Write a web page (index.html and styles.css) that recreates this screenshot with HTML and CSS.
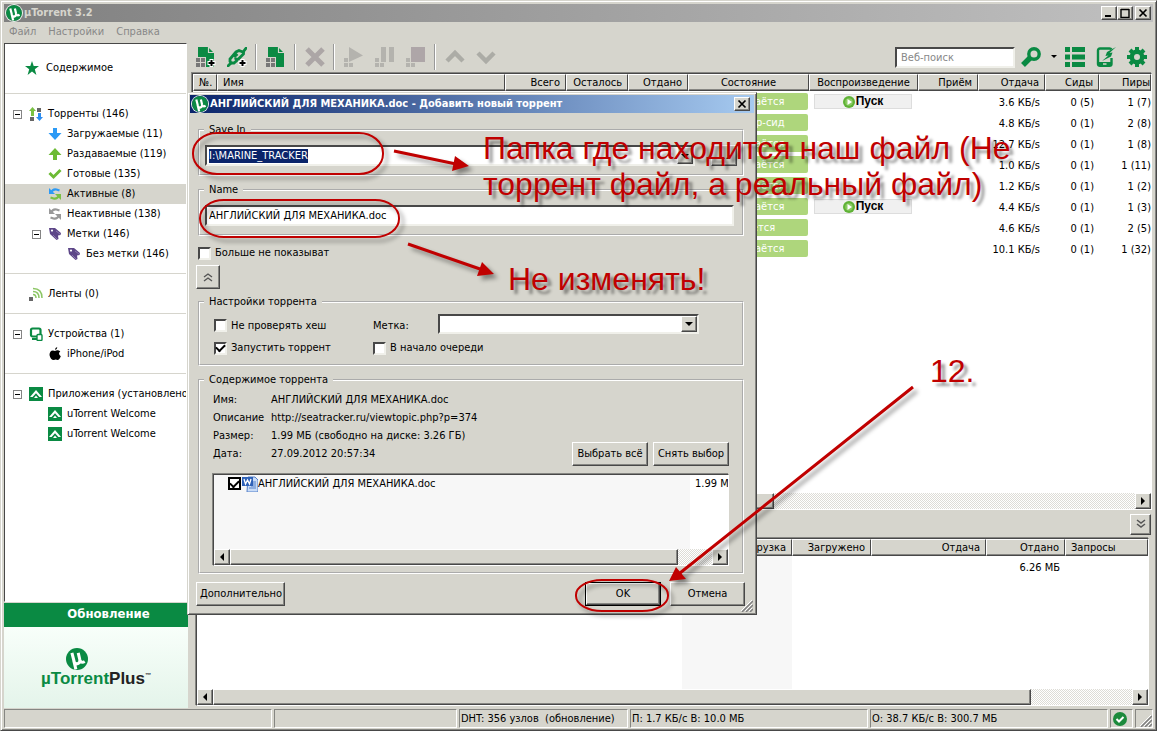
FILE: index.html
```html
<!DOCTYPE html>
<html lang="ru">
<head>
<meta charset="utf-8">
<title>µTorrent 3.2</title>
<link rel="stylesheet" href="styles.css">
</head>
<body>
<svg class="defs" aria-hidden="true">
  <symbol id="logo" viewBox="0 0 16 16"><circle cx="8" cy="8" r="8" fill="#0a8a43"/><path d="M4.300 3.500 5.900 9.800Q6.600 12 8.600 11.400 10.600 10.600 10 8.300L8.900 3.500M10 8.600Q11 11.400 13.600 9.800M5.600 9 7.200 15.500" fill="none" stroke="#fff" stroke-width="2.200"/></symbol>
  <symbol id="app" viewBox="0 0 14 14"><path d="M0 0h14v14H0z" fill="#0a8a43"/><path d="M1 10 7 3l6 7h-2.600L7 6.300 3.600 10z" fill="#fff"/><path d="M5 11l2-2.500L9 11z" fill="#fff"/></symbol>
  <symbol id="tag" viewBox="0 0 14 14"><path d="M1 1h6l6 5-.5 2-2.500.5.500 3.500-2 1L2 7z" fill="#5d4688"/><path d="m5 8 4 4M8 4l4 3" stroke="#8a78ad"/><circle cx="4" cy="3.600" r="1.100" fill="#fff"/></symbol>
  <symbol id="cycle" viewBox="0 0 14 14"><path d="M3 5.500Q5 1.500 8.500 2.500L11.500 3.500" fill="none" stroke="var(--a)" stroke-width="2.200"/><path d="M1 1v6h6z" fill="var(--a)"/><path d="M11 8.500Q9 12.500 5.500 11.500L2.500 10.500" fill="none" stroke="var(--b)" stroke-width="2.200"/><path d="M13 13V7H7z" fill="var(--b)"/></symbol>
  <symbol id="play" viewBox="0 0 12 12"><circle cx="6" cy="6" r="6" fill="#5fb236"/><circle cx="6" cy="6" r="3.800" fill="#8acb62"/><path d="M4.500 3 9 6 4.500 9z" fill="#fff"/></symbol>
  <symbol id="left" viewBox="0 0 8 8"><path d="M6 0v8L2 4z"/></symbol>
  <symbol id="right" viewBox="0 0 8 8"><path d="M2 0v8l4-4z"/></symbol>
  <symbol id="grip" viewBox="0 0 12 12"><path d="M1 12 12 1M5 12l7-7M9 12l3-3" stroke="#808080" stroke-width="1.500"/><path d="M0 11 11 0M4 11l7-7M8 11l3-3" stroke="#fff" stroke-width="1"/></symbol>
  <symbol id="doc" viewBox="0 0 20 20"><path d="M2 0h10l6 6v14H2z" fill="#0a8a43"/><path d="M12.500 0v5.500H18" fill="none" stroke="#d6d5cd" stroke-width="1.200"/><path d="M0 10h10v10H0z" fill="#d6d5cd"/><path d="M0 11h4v4H0zM5 11h4v4H5zM0 16h4v4H0zM5 16h4v4H5z" fill="#777"/></symbol>
  <symbol id="blocks" viewBox="0 0 20 20"><path d="M0 11h4v4H0zM0 16h4v4H0zM5 16h4v4H5z"/></symbol>
</svg>

<div class="window">
  <header class="titlebar">
    <svg class="title-logo"><use href="#logo"/></svg>
    <h1>µTorrent 3.2</h1>
    <button class="cap" aria-label="Свернуть"><svg viewBox="0 0 10 10"><path d="M1 8h6" stroke="#000" stroke-width="2"/></svg></button>
    <button class="cap" aria-label="Развернуть"><svg viewBox="0 0 10 10"><path d="M1 1.500h8M1 1v8.500h8V1" fill="none" stroke="#000" stroke-width="1.400"/></svg></button>
    <button class="cap cap-close" aria-label="Закрыть"><svg viewBox="0 0 10 10"><path d="m1.500 1.500 7 7m0-7-7 7" stroke="#000" stroke-width="1.700"/></svg></button>
  </header>
  <nav class="menu"><button>Файл</button><button>Настройки</button><button>Справка</button></nav>

  <div class="main">
    <aside class="side">
      <div class="tree">
        <section class="top"><div class="item home"><svg class="ico" viewBox="0 0 14 14"><path d="m7 0 1.700 5H14L9.800 8.300 11.400 14 7 10.500 2.600 14l1.600-5.700L0 5h5.300z" fill="#0a8a43"/></svg>Содержимое</div></section>
        <section>
          <div class="item"><i class="exp"></i><svg class="ico" viewBox="0 0 14 14"><path d="M3.500 0 7 4H5v5H2V4H0z" fill="#7ac143"/><path d="M8 1h4v4H8zM1 10h4v4H1z" fill="#666"/><path d="M9 6h3v4h2l-3.500 4L7 10h2z" fill="#2c8cf0"/></svg>Торренты (146)</div>
          <div class="item l2"><i class="noexp"></i><svg class="ico" viewBox="0 0 14 14"><path d="M5 1h4v5h4.500L7 13 .5 6H5z" fill="#2c9af5"/></svg>Загружаемые (11)</div>
          <div class="item l2"><i class="noexp"></i><svg class="ico" viewBox="0 0 14 14"><path d="M5 13h4V8h4.500L7 1 .5 8H5z" fill="#6dbb35"/></svg>Раздаваемые (119)</div>
          <div class="item l2"><i class="noexp"></i><svg class="ico" viewBox="0 0 14 14"><path d="m1.500 6 4 4L12.500 3" fill="none" stroke="#6dbb35" stroke-width="3"/></svg>Готовые (135)</div>
          <div class="item l2 sel"><i class="noexp"></i><svg class="ico live"><use href="#cycle"/></svg>Активные (8)</div>
          <div class="item l2"><i class="noexp"></i><svg class="ico idle"><use href="#cycle"/></svg>Неактивные (138)</div>
          <div class="item l2"><i class="exp"></i><svg class="ico"><use href="#tag"/></svg>Метки (146)</div>
          <div class="item l3"><i class="noexp"></i><svg class="ico"><use href="#tag"/></svg>Без метки (146)</div>
        </section>
        <section><div class="item"><i class="noexp"></i><svg class="ico" viewBox="0 0 14 14"><path d="M0 10h4v4H0z" fill="#666"/><path d="M4 7.500Q7 7.500 7 11M4 4.500q6 0 6 6.500M4 1.500q9 0 9 9.500" fill="none" stroke="#8cc665" stroke-width="1.500"/></svg>Ленты (0)</div></section>
        <section>
          <div class="item"><i class="exp"></i><svg class="ico" viewBox="0 0 14 14"><rect x="2" y="1.500" width="9.500" height="8" rx="1.500" fill="none" stroke="#0a8a43" stroke-width="2.200"/><path d="M3 12h5" stroke="#0a8a43" stroke-width="2"/><rect x="8" y="7.500" width="5" height="6" rx="1" fill="#fff" stroke="#0a8a43" stroke-width="1.400"/></svg>Устройства (1)</div>
          <div class="item l2"><i class="noexp"></i><svg class="ico" viewBox="0 0 14 14"><path d="M7 4Q8 3 10 3.200q1.500.2 2.300 1.300-2.800 2 .5 4.800Q11.500 13 9.600 13 7.500 12.200 6 13 2.500 13.200 1.500 8 1.500 3.500 5 3.400 6 3.500 7 4zM7 3Q7 .6 9.300 0 9.300 2.400 7 3z"/></svg>iPhone/iPod</div>
        </section>
        <section class="last">
          <div class="item"><i class="exp"></i><svg class="ico"><use href="#app"/></svg>Приложения (установлено:</div>
          <div class="item l2"><i class="noexp"></i><svg class="ico"><use href="#app"/></svg>uTorrent Welcome</div>
          <div class="item l2"><i class="noexp"></i><svg class="ico"><use href="#app"/></svg>uTorrent Welcome</div>
        </section>
      </div>
      <div class="upgrade">Обновление</div>
      <div class="plus"><svg class="plus-logo"><use href="#logo"/></svg><p>µTorrent<span>Plus</span><sup>™</sup></p></div>
    </aside>

    <main class="work">
      <div class="toolbar">
        <button class="tool" aria-label="Добавить торрент"><svg viewBox="0 0 20 20"><use href="#doc"/><path d="M15.500 12v8m-4-4h8" stroke="#fff" stroke-width="4"/><path d="M15.500 13v6m-3-3h6" stroke="#000" stroke-width="2"/></svg></button>
        <button class="tool" aria-label="Добавить по ссылке"><svg viewBox="0 0 20 20"><g fill="none" stroke="#0a8a43" stroke-width="2.800"><path d="M10.500 13 7 16H4.500L3 14.500V12l6-7 3-1.500 4 1.500 4-5"/><path d="m7 10 3.500-3M0 20l4-4M8 11q2 3 5-.5L16.500 7V5"/></g><path d="M15.500 12v8m-4-4h8" stroke="#fff" stroke-width="4"/><path d="M15.500 13v6m-3-3h6" stroke="#000" stroke-width="2"/></svg></button>
        <span class="sep"></span>
        <button class="tool" aria-label="Создать торрент"><svg><use href="#doc"/></svg></button>
        <span class="sep"></span>
        <button class="tool" aria-label="Удалить"><svg viewBox="0 0 20 20"><path d="m2 2 16 16m0-16L2 18" stroke="#aca6a6" stroke-width="5"/></svg></button>
        <span class="sep"></span>
        <button class="tool off" aria-label="Запустить"><svg viewBox="0 0 20 20"><use href="#blocks"/><path d="M5 0l14 8.500L5 15z"/></svg></button>
        <button class="tool off" aria-label="Пауза"><svg viewBox="0 0 20 20"><use href="#blocks"/><path d="M6 0h5v15H6zM14 0h5v15h-5z"/></svg></button>
        <button class="tool off" aria-label="Остановить"><svg viewBox="0 0 20 20"><use href="#blocks"/><path d="M5 0h14v15H5z" fill="#aea6a8"/></svg></button>
        <span class="sep"></span>
        <button class="tool" aria-label="Выше"><svg viewBox="0 0 20 20"><path d="m2 14 8-8 8 8" fill="none" stroke="#acaca6" stroke-width="4.500"/></svg></button>
        <button class="tool" aria-label="Ниже"><svg viewBox="0 0 20 20"><path d="m2 6 8 8 8-8" fill="none" stroke="#acaca6" stroke-width="4.500"/></svg></button>
        <input class="search" type="search" placeholder="Веб-поиск" aria-label="Веб-поиск">
        <button class="tool" aria-label="Искать"><svg viewBox="0 0 20 20"><circle cx="13" cy="7" r="5.200" fill="none" stroke="#0a8a43" stroke-width="3.400"/><path d="m9 11-7 7" stroke="#0a8a43" stroke-width="5.500"/></svg></button>
        <button class="drop" aria-label="Поисковики"><svg viewBox="0 0 6 6"><path d="M0 1h6L3 4z"/></svg></button>
        <button class="tool" aria-label="Список"><svg viewBox="0 0 20 20"><path d="M0 0h5v5H0zM7 0h13v5H7zM0 7.500h5v5H0zM7 7.500h13v5H7zM0 15h5v5H0zM7 15h13v5H7z" fill="#0a8a43"/></svg></button>
        <button class="tool" aria-label="Устройство"><svg viewBox="0 0 20 20"><path d="M15.500 11v6q0 1.700-2 1.700H4q-2 0-2-1.700V3.500Q2 1.500 4 1.500h9.500q1.500 0 2 1" fill="none" stroke="#0a8a43" stroke-width="2.400"/><path d="M3 15h12v4H3z" fill="#0a8a43"/><path d="M7 17h3.500" stroke="#d6d5cd" stroke-width="1.500"/><path d="M20 0 11 5l-1.500 4 3-.5L6 14l9-4.500L16.500 5.500l-3 .5z" fill="#0a8a43"/></svg></button>
        <button class="tool" aria-label="Настройки"><svg viewBox="0 0 20 20"><circle cx="10" cy="10" r="5.200" fill="none" stroke="#0a8a43" stroke-width="4.400"/><path d="M10 0v4M10 16v4M0 10h4M16 10h4M3 3l3 3M14 14l3 3M17 3l-3 3M6 14l-3 3" stroke="#0a8a43" stroke-width="4"/></svg></button>
      </div>

      <div class="pane list">
        <div class="scroll">
        <table class="grid torrents">
          <colgroup><col class="w24"><col><col class="w61"><col class="w62"><col class="w60"><col class="w121"><col class="w109"><col class="w60"><col class="w67"><col class="w54"><col class="w52"></colgroup>
          <thead><tr><th class="st">№.</th><th class="st">Имя</th><th>Всего</th><th>Осталось</th><th>Отдано</th><th class="ce">Состояние</th><th class="ce">Воспроизведение</th><th>Приём</th><th>Отдача</th><th>Сиды</th><th>Пиры</th></tr></thead>
          <tbody>
            <tr><td></td><td></td><td></td><td></td><td></td><td class="bar"><span>[П] Раздаётся</span></td><td class="bar"><button class="run"><svg><use href="#play"/></svg>Пуск</button></td><td></td><td>3.6 КБ/s</td><td>0 (5)</td><td>1 (7)</td></tr>
            <tr><td></td><td></td><td></td><td></td><td></td><td class="bar"><span>[П] Супер-сид</span></td><td></td><td></td><td>4.8 КБ/s</td><td>0 (1)</td><td>2 (8)</td></tr>
            <tr><td></td><td></td><td></td><td></td><td></td><td class="bar"><span>[П] Раздаётся</span></td><td></td><td></td><td>12.7 КБ/s</td><td>0 (1)</td><td>1 (8)</td></tr>
            <tr><td></td><td></td><td></td><td></td><td></td><td class="bar"><span>[П] Раздаётся</span></td><td></td><td></td><td>1.0 КБ/s</td><td>0 (1)</td><td>1 (11)</td></tr>
            <tr><td></td><td></td><td></td><td></td><td></td><td class="bar"><span>[П] Раздаётся</span></td><td></td><td></td><td>1.2 КБ/s</td><td>0 (1)</td><td>1 (2)</td></tr>
            <tr><td></td><td></td><td></td><td></td><td></td><td class="bar"><span>[П] Раздаётся</span></td><td class="bar"><button class="run"><svg><use href="#play"/></svg>Пуск</button></td><td></td><td>4.4 КБ/s</td><td>0 (1)</td><td>1 (3)</td></tr>
            <tr><td></td><td></td><td></td><td></td><td></td><td class="bar"><span>Раздаётся</span></td><td></td><td></td><td>4.6 КБ/s</td><td>0 (1)</td><td>2 (5)</td></tr>
            <tr><td></td><td></td><td></td><td></td><td></td><td class="bar"><span>[П] Раздаётся</span></td><td></td><td></td><td>10.1 КБ/s</td><td>0 (1)</td><td>1 (32)</td></tr>
          </tbody>
        </table>
        </div>
        <div class="hbar"><button aria-label="Влево"><svg><use href="#left"/></svg></button><div class="track"><div class="thumb t-list"></div></div><button aria-label="Вправо"><svg><use href="#right"/></svg></button></div>
      </div>

      <div class="tabs"><button class="fold" aria-label="Скрыть панель"><svg viewBox="0 0 10 10"><path d="m1 1 4 3 4-3M1 5l4 3 4-3" fill="none" stroke="#555" stroke-width="1.500"/></svg></button></div>

      <div class="pane details">
        <div class="scroll">
        <table class="grid peers">
          <colgroup><col><col class="w110 shade"><col class="w79"><col class="w115"><col class="w79"><col class="w83"></colgroup>
          <thead><tr><th class="st">IP</th><th>Загрузка</th><th>Загружено</th><th>Отдача</th><th>Отдано</th><th class="st">Запросы</th></tr></thead>
          <tbody><tr><td></td><td></td><td></td><td></td><td>6.26 МБ</td><td></td></tr><tr class="fill"><td></td><td></td><td></td><td></td><td></td><td></td></tr></tbody>
        </table>
        </div>
        <div class="hbar"><button aria-label="Влево"><svg><use href="#left"/></svg></button><div class="track"><div class="thumb t-peers"></div></div><button aria-label="Вправо"><svg><use href="#right"/></svg></button></div>
      </div>
    </main>
  </div>

  <footer class="status">
    <span></span><span></span><span>DHT: 356 узлов&nbsp; (обновление)</span><span>П: 1.7 КБ/с В: 10.0 МБ</span><span>О: 38.7 КБ/с В: 300.7 МБ</span>
    <span class="mid"><svg class="ok" viewBox="0 0 14 14"><circle cx="7" cy="7" r="7" fill="#1c8a3c"/><path d="m3.500 7 2.500 2.500 4.500-4.500" fill="none" stroke="#fff" stroke-width="2"/></svg></span>
    <span class="end"><svg class="grip"><use href="#grip"/></svg></span>
  </footer>
</div>

<div class="dialog" role="dialog" aria-labelledby="dt">
  <header class="dtitle"><svg class="title-logo"><use href="#logo"/></svg><h2 id="dt">АНГЛИЙСКИЙ ДЛЯ МЕХАНИКА.doc - Добавить новый торрент</h2><button class="cap" aria-label="Закрыть"><svg viewBox="0 0 10 10"><path d="m1.500 1.500 7 7m0-7-7 7" stroke="#000" stroke-width="1.700"/></svg></button></header>
  <form class="dbody" onsubmit="return false">
    <fieldset>
      <legend>Save In</legend>
      <div class="pathrow"><div class="combo"><input id="path" type="text" value="I:\MARINE_TRACKER" aria-label="Save In"><button type="button" class="arrow" aria-label="Открыть список"><svg viewBox="0 0 8 8"><path d="M0 2h8L4 6z"/></svg></button></div><button type="button" class="btn dots">...</button></div>
    </fieldset>
    <fieldset>
      <legend>Name</legend>
      <div class="namerow"><input class="field" type="text" value="АНГЛИЙСКИЙ ДЛЯ МЕХАНИКА.doc" aria-label="Name"></div>
    </fieldset>
    <label class="check never"><input type="checkbox"><span>Больше не показыват</span></label>
    <button type="button" class="btn less" aria-label="Свернуть параметры"><svg viewBox="0 0 10 10"><path d="m1 5 4-3 4 3M1 9l4-3 4 3" fill="none" stroke="#555" stroke-width="1.400"/></svg></button>
    <fieldset>
      <legend>Настройки торрента</legend>
      <div class="opts">
        <label class="check"><input type="checkbox"><span>Не проверять хеш</span></label>
        <label for="lab">Метка:</label>
        <div class="combo"><select id="lab"><option></option></select><i class="arrow"><svg viewBox="0 0 8 8"><path d="M0 2h8L4 6z"/></svg></i></div>
        <label class="check"><input type="checkbox" checked><span>Запустить торрент</span></label>
        <label class="check span2"><input type="checkbox"><span>В начало очереди</span></label>
      </div>
    </fieldset>
    <fieldset>
      <legend>Содержимое торрента</legend>
      <div class="content">
        <div class="info">
          <dl><dt>Имя:</dt><dd>АНГЛИЙСКИЙ ДЛЯ МЕХАНИКА.doc</dd><dt>Описание</dt><dd>http://seatracker.ru/viewtopic.php?p=374</dd><dt>Размер:</dt><dd>1.99 МБ (свободно на диске: 3.26 ГБ)</dd><dt>Дата:</dt><dd>27.09.2012 20:57:34</dd></dl>
          <button type="button" class="btn">Выбрать всё</button><button type="button" class="btn">Снять выбор</button>
        </div>
        <div class="pane files">
          <div class="frow">
            <label class="fname"><input type="checkbox" checked><svg viewBox="0 0 16 16"><path d="M6 1h7l3 3v12H5z" fill="#c9dcf7" stroke="#5580c8"/><path d="M9 6h5M9 8h5M9 10h5M7 12h7" stroke="#5580c8"/><path d="M0 1h11v9H0z" fill="#2f62b8"/><path d="m2 3 1.500 5L5.500 4l2 4L9 3" fill="none" stroke="#fff" stroke-width="1.300"/></svg><span>АНГЛИЙСКИЙ ДЛЯ МЕХАНИКА.doc</span></label>
            <span class="fsize">1.99 МБ</span>
          </div>
          <div class="hbar"><button type="button" aria-label="Влево"><svg><use href="#left"/></svg></button><div class="track"><div class="thumb t-files"></div></div><button type="button" aria-label="Вправо"><svg><use href="#right"/></svg></button></div>
        </div>
      </div>
    </fieldset>
    <div class="actions"><button type="button" class="btn more">Дополнительно</button><button class="btn default">OK</button><button type="button" class="btn">Отмена</button></div>
  </form>
  <svg class="grip dgrip"><use href="#grip"/></svg>
</div>

<svg class="marks" viewBox="0 0 1157 731" fill="none" stroke="#c00000" aria-hidden="true">
  <rect x="193" y="133" width="190" height="41" rx="24" ry="20" stroke-width="2"/>
  <rect x="200" y="200" width="199" height="37" rx="24" ry="18" stroke-width="2"/>
  <rect x="576" y="580" width="92" height="31" rx="26" ry="15" stroke-width="2"/>
  <path d="m394 151 62 13M408 244l72 25M913 387 680 573" stroke-width="3"/>
  <path d="m455 156-3 15 17-5zM482 262l-5 14 17-2zM676 567l10 12-17 2z" fill="#c00000" stroke="none"/>
</svg>
<p class="note n1">Папка где находится наш файл (Не<br>торрент файл, а реальный файл)</p>
<p class="note n2">Не изменять!</p>
<p class="note n3">12.</p>
<script src="script.js"></script>
</body>
</html>
```
FILE: styles.css
```css
:root { --face: #d6d5cd; --green: #0a8a43; --dark: #484848; --mid: #868682; }
* { box-sizing: border-box; }
body { margin: 0; font: 11px/14px "DejaVu Sans Condensed", "Noto Sans", sans-serif; color: #000; background: var(--face); overflow: hidden; }
button, input, select { font: inherit; color: inherit; margin: 0; padding: 0; border-radius: 0; }
button { background: none; border: 0; }
h1, h2, p, dl, dd { margin: 0; font-size: 11px; }
svg { display: block; flex: none; }
.defs { position: absolute; width: 0; height: 0; }

.window { display: flex; flex-direction: column; height: 100vh; background: var(--face); border: 1px solid; border-color: #d6d5cd var(--dark) var(--dark) #d6d5cd; box-shadow: inset 1px 1px #fff, inset -1px -1px var(--mid); padding: 3px 3px 2px; }
.titlebar { display: flex; align-items: center; height: 18px; padding: 0 2px; background: linear-gradient(90deg, #808080, #c0c0c0); color: #d6d5cd; }
.titlebar h1, .dtitle h2 { flex: 1; white-space: nowrap; font-weight: bold; padding-left: 2px; }
.title-logo { width: 16px; height: 16px; border-radius: 8px; box-shadow: 0 0 0 1px #e8f4ec; }
.cap { display: grid; place-items: center; width: 16px; height: 14px; background: var(--face); border: 1px solid; border-color: #fff var(--dark) var(--dark) #fff; box-shadow: inset -1px -1px var(--mid); }
.cap svg { width: 10px; height: 10px; }
.cap-close { margin-left: 2px; }
.menu { display: flex; gap: 12px; height: 20px; padding: 0 5px; color: #888; align-items: center; }

.main { flex: 1; min-height: 0; display: grid; grid-template-columns: 184px minmax(0, 1fr); gap: 2px; }
.side { display: flex; flex-direction: column; min-height: 0; }
.tree { flex: 1; min-height: 0; overflow: hidden; background: #fff; border: 1px solid; border-color: var(--dark) #fff #fff var(--dark); margin-right: 1px; margin-top: 1px; }
.tree section { padding: 10px 0 9px; border-bottom: 1px solid #d6d5cd; }
.tree .top { padding: 14px 0 15px; }
.tree .last { border: 0; }
.item { display: flex; align-items: center; height: 20px; padding-left: 8px; white-space: nowrap; }
.item.l2 { padding-left: 27px; }
.item.l3 { padding-left: 46px; }
.item.home { padding-left: 20px; }
.item.home .ico { margin-right: 7px; }
.item.sel { background: var(--face); }
.ico { width: 14px; height: 14px; margin-right: 5px; }
.live { --a: #2c9af5; --b: #7ac143; }
.idle { --a: #999; --b: #999; }
.exp, .noexp { width: 9px; height: 9px; margin-right: 7px; flex: none; }
.exp { border: 1px solid #848484; background: linear-gradient(#000, #000) center / 5px 1px no-repeat #fff; }
.upgrade { margin-top: 1px; height: 24px; background: var(--green); color: #fff; text-align: center; font-size: 13px; line-height: 22px; font-weight: bold; padding-left: 25px; }
.plus { height: 81px; display: flex; flex-direction: column; align-items: center; padding-top: 21px; background: linear-gradient(#f8fffa, #e4f4ea); }
.plus-logo { width: 22px; height: 22px; margin-right: 38px; }
.plus p { font: bold 17px/18px "Liberation Sans", Arial, sans-serif; color: var(--green); }
.plus span { color: #222; }
.plus sup { font-size: 6px; line-height: 6px; color: #222; }

.work { display: flex; flex-direction: column; min-width: 0; padding: 0 1px 2px 0; }
.toolbar { display: flex; align-items: center; height: 30px; }
.tool { width: 31px; height: 24px; display: grid; place-items: center; flex: none; }
.tool svg { width: 20px; height: 20px; }
.off { fill: #b4b3ae; }
.sep { width: 2px; height: 26px; margin: 0 3px; background: #999; border-right: 1px solid #fff; }
.search { margin-left: auto; width: 120px; height: 21px; padding: 0 4px; background: #fff; border: 2px solid; border-color: var(--dark) #f0f0ea #f0f0ea var(--dark); outline: 0; appearance: none; }
.search::placeholder { color: #888; opacity: 1; }
.drop { width: 13px; height: 20px; display: grid; place-items: center; padding-left: 2px; }
.drop svg { width: 6px; height: 6px; }

.pane { background: #fff; border: 1px solid; border-color: var(--dark) #fff #fff var(--dark); box-shadow: -1px -1px var(--mid); display: flex; flex-direction: column; overflow: hidden; }
.list { flex: 1; min-height: 0; margin-left: 2px; margin-top: 1px; }
.scroll { flex: 1; min-height: 0; overflow: hidden; }
.grid { width: 100%; border-collapse: separate; border-spacing: 0; table-layout: fixed; }
.grid th { height: 17px; padding: 0 5px; font-weight: normal; text-align: right; background: var(--face); border: 1px solid; border-color: #fff var(--dark) var(--dark) #fff; box-shadow: inset 0 -1px var(--mid); white-space: nowrap; overflow: hidden; }
.grid th.st { text-align: left; }
.grid th.ce { text-align: center; }
.grid td { height: 21px; padding: 2px 5px 0; text-align: right; white-space: nowrap; overflow: hidden; }
.torrents th:last-child, .torrents td:last-child { padding-right: 0; }
.grid td.bar { padding: 0 1px; }
.bar span { display: block; height: 17px; line-height: 17px; border-radius: 2px; background: #aed67c; color: #fff; text-align: center; }
.run { display: flex; align-items: center; justify-content: center; gap: 1px; width: 98px; height: 15px; margin-left: 4px; background: #f0f0f0; border: 1px solid #ddd; font: bold 12px/13px "Liberation Sans", Arial, sans-serif; }
.run svg { width: 12px; height: 12px; }
.w24 { width: 24px; } .w52 { width: 52px; } .w54 { width: 54px; } .w60 { width: 60px; } .w61 { width: 61px; } .w62 { width: 62px; } .w67 { width: 67px; }
.w79 { width: 79px; } .w83 { width: 83px; } .w109 { width: 109px; } .w110 { width: 110px; } .w115 { width: 115px; } .w121 { width: 121px; }
.shade { background: #f7f7f7; }
.peers { height: 100%; }
.peers .fill td { height: auto; }
.tabs { display: flex; justify-content: flex-end; align-items: center; height: 28px; padding-right: 1px; }
.fold, .hbar button, .btn, .thumb, .arrow { background: var(--face); border: 1px solid; border-color: #fff var(--dark) var(--dark) #fff; box-shadow: inset -1px -1px var(--mid); }
.fold { display: grid; place-items: center; width: 21px; height: 21px; }
.fold svg, .less svg { width: 10px; height: 10px; }
.details { height: 168px; margin: 0 3px 0 6px; }
.hbar { display: flex; height: 16px; flex: none; }
.hbar button { width: 16px; display: grid; place-items: center; flex: none; }
.hbar svg { width: 8px; height: 8px; }
.track { flex: 1; background: repeating-conic-gradient(#fff 0 25%, #dddcd6 0 50%) 0 0 / 2px 2px; }
.thumb { height: 16px; }
.t-list { width: 61%; }
.t-peers { width: 89%; }
.t-files { width: 93%; }

.status { display: grid; grid-template-columns: 268px 183px 169px 238px 238px 23px minmax(17px, 1fr); gap: 2px; height: 20px; padding-top: 1px; white-space: nowrap; }
.status > span { border: 1px solid; border-color: var(--mid) #fff #fff var(--mid); line-height: 17px; padding-left: 1px; overflow: hidden; }
.status .mid { display: flex; align-items: center; padding-left: 2px; }
.status .end { display: flex; align-items: flex-end; justify-content: flex-end; }
.ok { width: 14px; height: 14px; }
.grip { width: 12px; height: 12px; }

.dialog { position: absolute; left: 187px; top: 92px; width: 570px; background: var(--face); border: 1px solid; border-color: #d6d5cd var(--dark) var(--dark) #d6d5cd; box-shadow: inset 1px 1px #fff, inset -1px -1px var(--mid); padding: 2px; }
.dtitle { display: flex; align-items: center; height: 18px; padding: 0 4px 0 2px; background: linear-gradient(90deg, #0a246a, #a6caf0); color: #fff; }
.dbody { padding: 10px 8px 6px 6px; }
fieldset { margin: 0 2px; padding: 0 5px 8px; border: 2px groove #fff; min-width: 0; }
fieldset + fieldset { margin-top: 7px; }
legend { padding: 0 5px; margin-left: -1px; height: 14px; }
.pathrow { display: flex; padding-top: 8px; gap: 16px; }
.combo { position: relative; display: flex; height: 21px; background: #fff; border: 2px solid; border-color: var(--dark) #f0f0ea #f0f0ea var(--dark); }
.pathrow .combo { width: 490px; }
.combo input, .combo select { flex: 1; min-width: 0; border: 0; background: none; padding: 0 2px; outline: 0; appearance: none; }
.combo input::selection { background: #0a246a; color: #fff; }
.arrow { width: 16px; display: grid; place-items: center; flex: none; pointer-events: none; }
.arrow svg { width: 8px; height: 8px; }
.btn { height: 24px; padding: 0 3px; text-align: center; white-space: nowrap; }
.dots { width: 26px; height: 21px; }
.namerow { padding: 8px 3px 0 0; display: flex; }
.field { flex: 1; height: 21px; padding: 0 2px; background: #fff; border: 2px solid; border-color: var(--dark) #f0f0ea #f0f0ea var(--dark); outline: 0; }
.check { display: flex; align-items: center; gap: 4px; }
.check input, .fname input { appearance: none; width: 13px; height: 13px; flex: none; background: #fff; border: 2px solid; border-color: var(--dark) #f0f0ea #f0f0ea var(--dark); display: grid; place-items: center; }
.check input:checked::after, .fname input:checked::after { content: ""; width: 7px; height: 4px; border: solid #000; border-width: 0 0 2px 2px; transform: rotate(-45deg); margin-top: -2px; }
.never { margin: 10px 2px 0; height: 14px; }
.less { display: grid; place-items: center; width: 24px; margin: 5px 0 6px; }
.opts { display: grid; grid-template-columns: 159px 65px 261px; grid-template-rows: 23px 22px; align-items: center; padding: 5px 9px 0; margin-bottom: -3px; }
.opts .combo { height: 20px; align-self: start; }
.span2 { grid-column: span 2; }
.content { padding: 4px 8px 0; margin-bottom: -2px; }
.info { display: flex; align-items: flex-end; gap: 5px; height: 75px; }
.info dl { flex: 1; align-self: flex-start; display: grid; grid-template-columns: 58px 1fr; line-height: 18px; }
.info .btn { width: 76px; }
.files { height: 92px; margin-top: 8px; }
.frow { flex: 1; display: grid; grid-template-columns: minmax(0, 1fr) 38px; }
.fname { display: flex; align-items: flex-start; background: #f7f7f7; padding: 1px 0 0 14px; line-height: 16px; }
.fname input { border: 2px solid #000; margin: 1px 1px 0 0; }
.fname svg { width: 16px; height: 16px; }
.fsize { padding: 1px 0 0 5px; line-height: 16px; white-space: nowrap; overflow: hidden; }
.actions { display: flex; gap: 9px; margin: 8px 1px 0 0; }
.actions .btn { width: 75px; }
.actions .more { width: 89px; margin-right: auto; }
.actions .default { width: 76px; outline: 1px solid #000; outline-offset: -1px; border-width: 2px; }
.dgrip { position: absolute; right: 3px; bottom: 2px; }

.marks { position: absolute; left: 0; top: 0; width: 1157px; height: 731px; pointer-events: none; filter: drop-shadow(4px 4px 2px rgba(0, 0, 0, .4)); }
.note { position: absolute; font: 32px/36px "Liberation Sans", Arial, sans-serif; color: #c00000; white-space: nowrap; text-shadow: 4px 4px 3px rgba(0, 0, 0, .4); }
.n1 { left: 483px; top: 130px; }
.n2 { left: 508px; top: 261px; }
.n3 { left: 930px; top: 353px; }
```
FILE: script.js
```js
const path = document.getElementById("path");
path.focus();
path.select();
```
